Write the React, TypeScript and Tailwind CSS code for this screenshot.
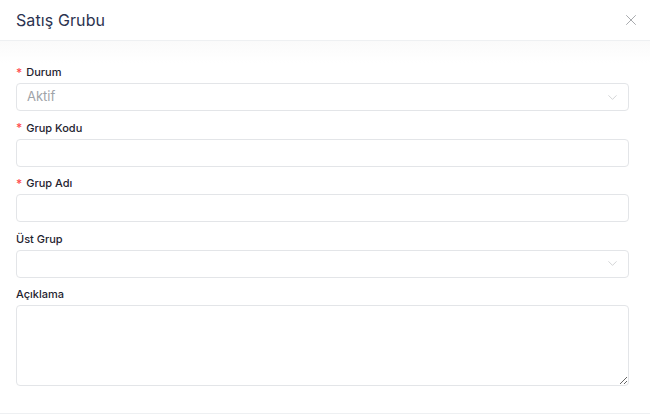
import { ChevronDown, X } from 'lucide-react'

function Label({ text, required }: { text: string; required?: boolean }) {
    return (
        <label className="flex items-center h-[15px] text-[11px] font-medium text-[#1f2430] mb-[3px]">
            {required && <span className="text-[#ff4d4f] mr-[4px] text-[12px] leading-none">*</span>}
            {text}
        </label>
    )
}

function SelectBox({ value }: { value?: string }) {
    return (
        <div className="h-[28px] border border-[#e3e5e8] rounded-[4px] bg-white flex items-center justify-between pl-[10px] pr-[8px]">
            <span className="text-[13px] text-[#a0a3a8]">{value || ''}</span>
            <ChevronDown size={15} strokeWidth={1} className="text-[#b8babd]" />
        </div>
    )
}

export default function App() {
    return (
        <div className="w-[650px] h-[414px] bg-white overflow-hidden" style={{ fontFamily: 'Inter, "Open Sans", sans-serif' }}>
            <div className="h-[41px] border-b border-[#eef0f2] flex items-center justify-between pl-[16px] pr-[10px]">
                <h1 className="text-[16px] text-[#2c3350] tracking-[0.1px]">Satış Grubu</h1>
                <X size={18} strokeWidth={1} className="text-[#8b8e93]" />
            </div>
            <div className="bg-gradient-to-b from-[#fafafa] to-white to-[22px] pl-[16px] pr-[21px] pt-[24px] pb-[27px] border-b border-[#eef0f2]">
                <div className="flex flex-col gap-[9.5px]">
                    <div>
                        <Label text="Durum" required />
                        <SelectBox value="Aktif" />
                    </div>
                    <div>
                        <Label text="Grup Kodu" required />
                        <input className="w-full h-[28px] border border-[#e3e5e8] rounded-[4px] bg-white outline-none block" />
                    </div>
                    <div>
                        <Label text="Grup Adı" required />
                        <input className="w-full h-[28px] border border-[#e3e5e8] rounded-[4px] bg-white outline-none block" />
                    </div>
                    <div>
                        <Label text="Üst Grup" />
                        <SelectBox />
                    </div>
                    <div>
                        <Label text="Açıklama" />
                        <textarea className="w-full h-[81px] border border-[#e3e5e8] rounded-[4px] bg-white outline-none block" />
                    </div>
                </div>
            </div>
        </div>
    )
}
